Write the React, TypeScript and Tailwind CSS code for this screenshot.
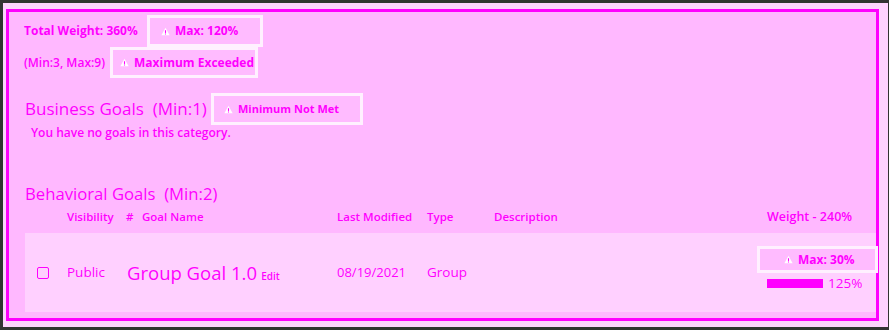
import React from "react";

const FONT = { fontFamily: '"Open Sans", "Noto Sans", sans-serif' };

function WarnIcon() {
  return (
    <svg width="9" height="9" viewBox="0 0 10 10" className="shrink-0">
      <path d="M5 0.8 L9.6 9.2 L0.4 9.2 Z" fill="#ffffff" />
      <rect x="4.4" y="3.6" width="1.2" height="3" fill="#ff00ff" />
      <rect x="4.4" y="7.2" width="1.2" height="1.1" fill="#ff00ff" />
    </svg>
  );
}

function Badge({ text, className = "" }: { text: string; className?: string }) {
  return (
    <div
      className={`flex items-center gap-[5px] border-[3px] border-[#fff0ff] bg-[#ffbbff] font-bold ${className}`}
    >
      <WarnIcon />
      <span>{text}</span>
    </div>
  );
}

export default function App() {
  return (
    <div
      className="w-[889px] h-[330px] bg-[#333333] pl-[3px] pt-[3px] pb-[3px] pr-[1px] text-[#ff00ff]"
      style={FONT}
    >
      <div className="h-full bg-[#ffd3ff] pl-[3px] pt-[6px] pr-[9px] pb-[6px]">
        <div className="h-full border-[3px] border-[#ff00ff] bg-[#ffb8ff] flex flex-col">
          {/* totals */}
          <div className="flex items-center h-[35px] pl-[15px] pt-[3px]">
            <span className="text-[12px] font-bold w-[123px]">Total Weight: 360%</span>
            <Badge text="Max: 120%" className="h-[32px] w-[116px] pl-[11px] text-[12px]" />
          </div>
          <div className="flex items-center h-[31px] pl-[15px]">
            <span className="text-[12px] font-semibold w-[86px]">(Min:3, Max:9)</span>
            <Badge text="Maximum Exceeded" className="h-[31px] w-[148px] pl-[7px] text-[12px]" />
          </div>

          {/* business goals */}
          <div className="flex items-center h-[32px] mt-[15px] pl-[16px]">
            <span className="text-[17px] w-[186px] whitespace-pre">Business Goals  (Min:1)</span>
            <Badge text="Minimum Not Met" className="h-[32px] w-[152px] pl-[10px] text-[11px]" />
          </div>
          <div className="pl-[22px] text-[12px] font-semibold leading-[16px]">
            You have no goals in this category.
          </div>

          {/* behavioral goals */}
          <div className="pl-[16px] mt-[42px] text-[16.7px] leading-[22px] whitespace-pre">
            Behavioral Goals  (Min:2)
          </div>
          <div className="flex items-center h-[24px] text-[11.5px] font-semibold">
            <span className="ml-[58px] w-[59px]">Visibility</span>
            <span className="w-[16px]">#</span>
            <span className="w-[195px]">Goal Name</span>
            <span className="w-[90px]">Last Modified</span>
            <span className="w-[67px]">Type</span>
            <span className="w-[273px]">Description</span>
            <span className="text-[12.5px]">Weight - 240%</span>
          </div>

          <div className="ml-[16px] mt-[4px] h-[79px] bg-[#ffd0ff] flex items-center">
            <div className="ml-[12px] w-[12px] h-[12px] border-[1.5px] border-[#ff00ff] rounded-[2px] bg-[#ffd0ff] shrink-0" />
            <span className="ml-[18px] w-[60px] text-[13.5px]">Public</span>
            <span className="w-[210px] whitespace-nowrap">
              <span className="text-[18.5px]">Group Goal 1.0</span>{" "}
              <span className="text-[10px] font-semibold">Edit</span>
            </span>
            <span className="w-[90px] text-[13px]">08/19/2021</span>
            <span className="text-[13.5px] w-[330px]">Group</span>
            <div className="flex flex-col items-start self-start mt-[13px] -mr-[3px]">
              <Badge text="Max: 30%" className="h-[27px] w-[121px] pl-[24px] text-[12px]" />
              <div className="flex items-center ml-[10px] mt-[3px]">
                <div className="w-[56px] h-[9px] bg-[#ff00ff]" />
                <span className="ml-[5px] text-[13.5px] leading-[14px]">125%</span>
              </div>
            </div>
          </div>
        </div>
      </div>
    </div>
  );
}
